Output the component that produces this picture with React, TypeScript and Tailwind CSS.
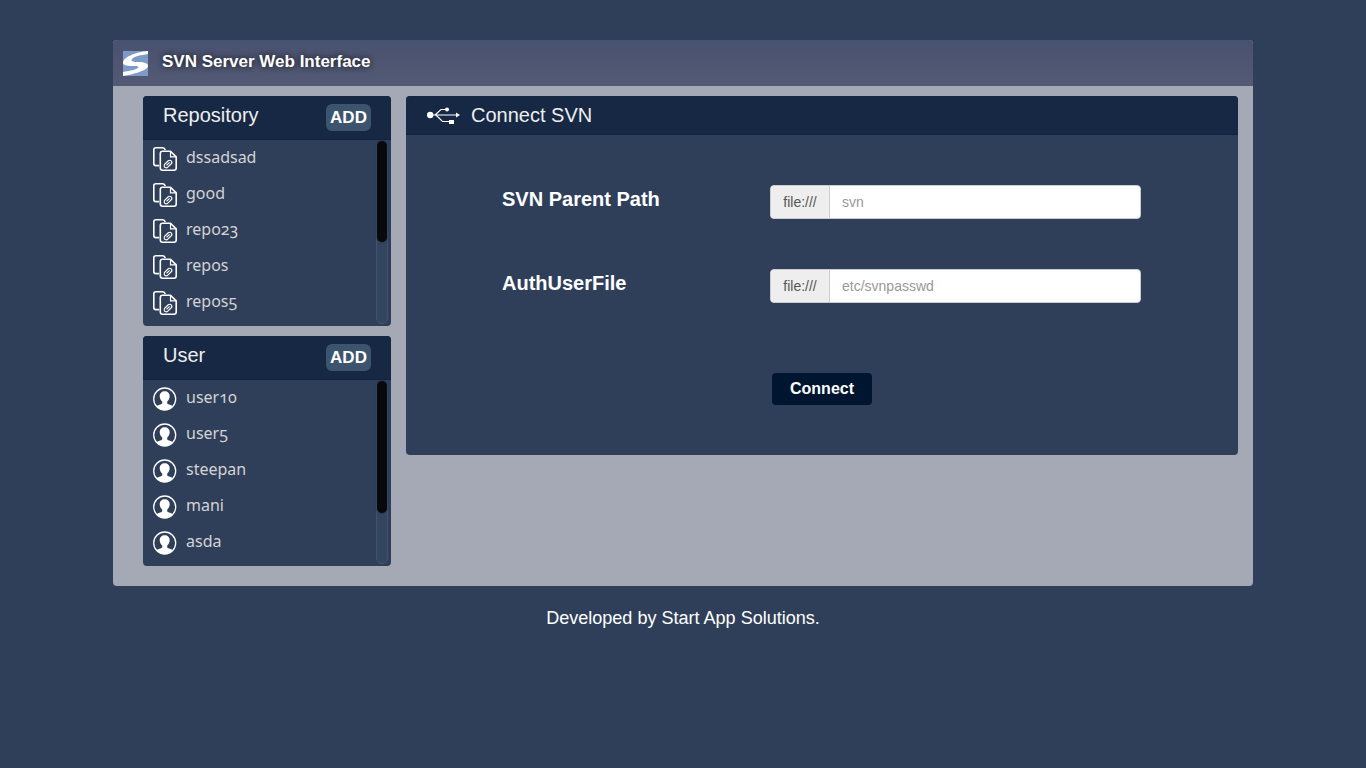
import React from "react";

const repos = ["dssadsad", "good", "repo23", "repos", "repos5"];
const users = ["user10", "user5", "steepan", "mani", "asda"];

const LogoIcon = () => (
    <svg width="25" height="25" viewBox="0 0 25 25" className="shrink-0">
        <rect width="25" height="25" fill="#7c9bc9" />
        <path d="M25 0V3C17 4 9 6 8.5 9C8.5 10.5 11 11 15 11C21 11 25 12 25 15C25 19 12 23 0 25V21C7 20 15.5 18 15.5 16C15.5 15 12 15 9 15C3 15 0 14 0 12C0 6 13 1 25 0Z" fill="#ffffff" />
    </svg>
);

const RepoIcon = () => (
    <svg width="24" height="24" viewBox="0 0 24 24" fill="none" stroke="#ffffff" strokeWidth="1.6" className="mt-[3px] shrink-0">
        <path d="M6 18.6H3C1.7 18.6 .8 17.7 .8 16.4V2.6C.8 1.4 1.7 .8 3 .8H9.8C11 .8 11.8 1.5 12.2 3" />
        <path d="M9.5 4.3H17.5L23.2 9.8V21C23.2 22.4 22.3 23.2 21 23.2H9.5C8.2 23.2 7.3 22.4 7.3 21V6.5C7.3 5.2 8.2 4.3 9.5 4.3Z" fill="#2f3f5a" />
        <path d="M17.5 4.3V9.8H23.2" strokeWidth="1.2" />
        <path d="M11.5 17.5L15 14C16 13 17.5 13 18.2 13.8C19 14.6 19 16 18 17L14.8 20.2C13.8 21.2 12.3 21 11.6 20.2C11 19.4 11 18.4 11.5 17.5ZM13.5 18.3L16.6 15.3" strokeWidth="1.1" />
    </svg>
);

const UserIcon = () => (
    <svg width="24" height="24" viewBox="0 0 24 24" className="mt-[3px] shrink-0">
        <circle cx="11.7" cy="12" r="11" fill="#2f3f5a" stroke="#ffffff" strokeWidth="1.3" />
        <path d="M11.7 4.2C8.8 4.2 6.7 6.2 6.7 9.2C6.7 11.4 7.8 13.4 9.2 14.6V16.4C8.2 17.4 4.8 17.8 3.2 19.4C5.3 21.8 8.2 23 11.7 23C15.2 23 18.1 21.8 20.2 19.4C18.6 17.8 15.2 17.4 14.2 16.4V14.6C15.6 13.4 16.7 11.4 16.7 9.2C16.7 6.2 14.6 4.2 11.7 4.2Z" fill="#ffffff" />
    </svg>
);

const UsbIcon = () => (
    <svg width="34" height="18" viewBox="0 0 34 18" className="shrink-0">
        <circle cx="3.2" cy="9" r="3.2" fill="#ffffff" />
        <path d="M3 9H31" stroke="#ffffff" strokeWidth="1.1" />
        <path d="M29 6.5L33 9L29 11.5Z" fill="#ffffff" />
        <path d="M8 9L14 3.5H19M9 9L15.5 15.5H23" stroke="#ffffff" strokeWidth="1.1" fill="none" />
        <circle cx="20" cy="3.5" r="2" fill="#ffffff" />
        <rect x="22" y="14" width="5" height="4" fill="#ffffff" />
    </svg>
);

const SidePanel = ({ title, items, icon, thumb }: { title: string; items: string[]; icon: React.ReactNode; thumb: string }) => (
    <div className="h-[230px] rounded bg-[#2f3f5a] overflow-hidden">
        <div className="flex h-[44px] justify-between border-b border-[#10233f] bg-[#172844] pl-5 pr-5">
            <span className="pt-[5px] text-[20px] leading-[28px] text-[#eeeeee]">{title}</span>
            <button className="mt-2 h-[27px] w-[45px] rounded-md bg-[#3d546f] text-center text-[17px] font-bold text-white">ADD</button>
        </div>
        <div className="flex">
            <ul className="-mt-px flex-1 pl-[10px]">
                {items.map((item) => (
                    <li key={item} className="flex h-[36px] items-center gap-[9px]">
                        {icon}
                        <span className="font-['Noto_Sans'] text-base text-[#d3d3d3] oldstyle-nums">{item}</span>
                    </li>
                ))}
            </ul>
            <div className="mr-[3px] mt-px h-[183px] w-3 rounded-lg border border-[#42536f] bg-[#34455f]">
                <div className={`${thumb} -mt-px rounded-lg bg-[#08090c] shadow-[0_0_2px_#1a2130]`} />
            </div>
        </div>
    </div>
);

const Field = ({ label, placeholder }: { label: string; placeholder: string }) => (
    <div className="flex h-[84px]">
        <label className="w-[268px] text-[20px] font-bold leading-[28px] text-white">{label}</label>
        <div className="flex h-[34px] w-[371px] overflow-hidden rounded border border-[#cccccc] bg-white text-sm">
            <span className="flex w-[59px] items-center justify-center border-r border-[#cccccc] bg-[#eeeeee] text-[#555555]">file:///</span>
            <span className="flex items-center pl-3 text-[#999999]">{placeholder}</span>
        </div>
    </div>
);

export default function App() {
    return (
        <div className="min-h-[768px] bg-[#2f3f5a] pt-10 font-['Liberation_Sans',sans-serif]">
            <div className="mx-auto w-[1140px] overflow-hidden rounded bg-[#a5a9b5]">
                <div className="flex h-[46px] items-center gap-[14px] bg-gradient-to-b from-[#495170] to-[#525a74] pl-[10px]">
                    <LogoIcon />
                    <span className="-mt-0.5 text-[17px] font-bold text-white [text-shadow:0_0_6px_#111111]">SVN Server Web Interface</span>
                </div>
                <div className="flex gap-[15px] pb-5 pl-[30px] pr-[15px] pt-[10px]">
                    <div className="flex w-[248px] flex-col gap-[10px]">
                        <SidePanel title="Repository" items={repos} icon={<RepoIcon />} thumb="h-[101px]" />
                        <SidePanel title="User" items={users} icon={<UserIcon />} thumb="h-[132px]" />
                    </div>
                    <div className="h-[359px] flex-1 overflow-hidden rounded bg-[#2f3f5a]">
                        <div className="flex h-[39px] items-center gap-[10px] border-b border-[#10233f] bg-[#172844] pl-[21px]">
                            <UsbIcon />
                            <span className="text-[20px] text-[#eeeeee]">Connect SVN</span>
                        </div>
                        <div className="pl-[96px] pt-[50px]">
                            <Field label="SVN Parent Path" placeholder="svn" />
                            <Field label="AuthUserFile" placeholder="etc/svnpasswd" />
                            <button className="ml-[270px] mt-[20px] h-[32px] w-[100px] rounded bg-[#00152f] text-base font-bold text-white">Connect</button>
                        </div>
                    </div>
                </div>
            </div>
            <p className="pt-[21px] text-center text-[18.05px] leading-[22px] text-white">Developed by Start App Solutions.</p>
        </div>
    );
}
